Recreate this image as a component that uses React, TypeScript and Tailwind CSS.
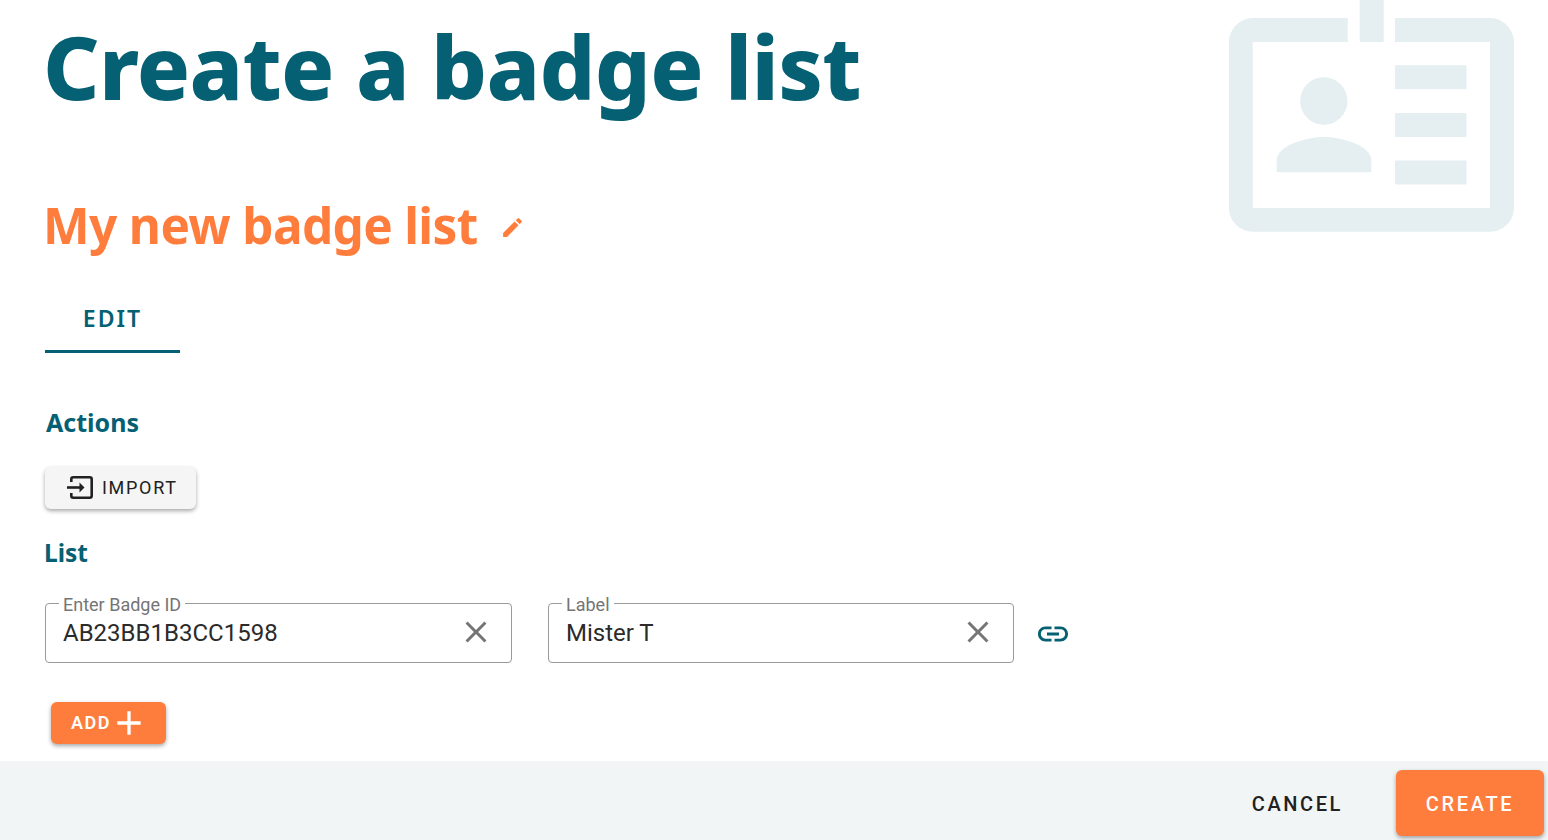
const heading = "font-['Noto_Sans',sans-serif]";

function BadgeArt() {
  return (
    <svg
      className="absolute left-[1210px] top-0"
      width="338"
      height="250"
      viewBox="0 0 338 250"
      fill="#e5eef1"
    >
      <path
        fillRule="evenodd"
        d="M43 18H137.7V42H42.7V208H280V42H185V18H280C293 18 304 29 304 42V208C304 221 293 231.7 280 231.7H43C30 231.7 19 221 19 208V42C19 29 30 18 43 18Z"
      />
      <rect x="149.7" y="0" width="24" height="42" rx="1" />
      <rect x="185" y="65.3" width="71.5" height="24" rx="1" />
      <rect x="185" y="113" width="71.5" height="24" rx="1" />
      <rect x="185" y="160.5" width="71.5" height="24" rx="1" />
      <circle cx="113.8" cy="101" r="23.7" />
      <path d="M66.7 172.3V160.5C66.7 144.5 98.5 137 114 137S161.3 144.5 161.3 160.5V172.3Z" />
    </svg>
  );
}

function ImportIcon() {
  return (
    <svg width="30" height="30" viewBox="0 0 30 30" fill="none" stroke="#212121" strokeWidth="2.6">
      <path d="M6.3 9V6.3a2 2 0 0 1 2-2h16.4a2 2 0 0 1 2 2v16.4a2 2 0 0 1-2 2H8.3a2 2 0 0 1-2-2V20" />
      <path d="M2 14.5h16" />
      <path d="M14.5 9.5l5 5-5 5z" fill="#212121" stroke="none" />
    </svg>
  );
}

function MaterialIcon({ d, className }: { d: string; className: string }) {
  return (
    <svg className={className} viewBox="0 0 24 24" fill="currentColor">
      <path d={d} />
    </svg>
  );
}

const closePath = "M19 6.41 17.59 5 12 10.59 6.41 5 5 6.41 10.59 12 5 17.59 6.41 19 12 13.41 17.59 19 19 17.59 13.41 12z";
const editPath = "M3 17.25V21h3.75L17.81 9.94l-3.75-3.75L3 17.25zM20.71 7.04a.996.996 0 0 0 0-1.41l-2.34-2.34a.996.996 0 0 0-1.41 0l-1.83 1.83 3.75 3.75 1.83-1.83z";
const linkPath = "M3.9 12c0-1.71 1.39-3.1 3.1-3.1h4V7H7c-2.76 0-5 2.24-5 5s2.24 5 5 5h4v-1.9H7c-1.71 0-3.1-1.39-3.1-3.1zM8 13h8v-2H8v2zm9-6h-4v1.9h4c1.71 0 3.1 1.39 3.1 3.1s-1.39 3.1-3.1 3.1h-4V17h4c2.76 0 5-2.24 5-5s-2.24-5-5-5z";
const addPath = "M19 13h-6v6h-2v-6H5v-2h6V5h2v6h6v2z";

function Field({ label, value, className }: { label: string; value: string; className: string }) {
  return (
    <div className={`relative h-[60px] rounded border border-[#9a9a9a] pl-[17px] pr-[17px] flex items-center justify-between ${className}`}>
      <span className="absolute left-[13px] -top-[8px] bg-white px-[4px] text-[18px] leading-[18px] text-[#757575]">
        {label}
      </span>
      <span className="text-[24px] leading-[28px] text-[#2b2b2b]">{value}</span>
      <MaterialIcon d={closePath} className="w-[36px] h-[36px] mt-[-2px] text-[#757575]" />
    </div>
  );
}

export default function App() {
  return (
    <div className="relative h-[840px] w-[1548px] overflow-hidden bg-white flex flex-col font-['Roboto',sans-serif]">
      <BadgeArt />

      <main className="flex-1 pl-[45px]">
        <h1 className={`${heading} pt-[11px] ml-[-2px] text-[88px] leading-[110px] font-extrabold tracking-[-0.7px] text-[#046072]`}>
          Create a badge list
        </h1>

        <div className="mt-[74px] ml-[-2px] flex items-center">
          <h2 className={`${heading} text-[49.5px] leading-[60px] font-bold tracking-[-0.65px] text-[#ff7d3c]`}>
            My new badge list
          </h2>
          <MaterialIcon d={editPath} className="ml-[22px] mt-[4px] w-[25px] h-[25px] text-[#ff7d3c]" />
        </div>

        <div className="mt-[36px] w-[135px] h-[62px] pb-[5px] border-b-[3px] border-[#046072] flex items-center justify-center">
          <span className={`${heading} text-[23px] leading-[28px] tracking-[2px] font-semibold text-[#046072]`}>EDIT</span>
        </div>

        <h3 className={`${heading} mt-[53px] ml-[1px] text-[25px] leading-[32px] font-bold text-[#046072]`}>Actions</h3>

        <button className="mt-[29px] w-[151px] h-[42px] pl-[20px] rounded-md bg-[#f5f5f5] shadow-[0_2px_4px_rgba(0,0,0,0.35)] flex items-center gap-[7px] text-[18px] tracking-[1.7px] text-[#212121]">
          <ImportIcon />
          <span className="mt-[-2px]">IMPORT</span>
        </button>

        <h3 className={`${heading} mt-[28px] ml-[-1px] text-[24.5px] leading-[32px] font-bold text-[#046072]`}>List</h3>

        <div className="mt-[34px] flex items-center">
          <Field label="Enter Badge ID" value="AB23BB1B3CC1598" className="w-[467px]" />
          <Field label="Label" value="Mister T" className="w-[466px] ml-[36px]" />
          <MaterialIcon d={linkPath} className="ml-[20.5px] mt-[2px] w-[36px] h-[36px] text-[#046072]" />
        </div>

        <button className="mt-[39px] ml-[6px] w-[115px] h-[42px] pl-[20px] rounded-md bg-[#ff7d3c] shadow-[0_2px_4px_rgba(0,0,0,0.35)] flex items-center text-[18px] font-semibold tracking-[1.5px] text-white">
          <span className="mt-[-2px]">ADD</span>
          <MaterialIcon d={addPath} className="w-[40px] h-[40px] ml-[-2px]" />
        </button>
      </main>

      <footer className="h-[79px] bg-[#f2f5f6] flex items-center justify-end pr-[4px]">
        <span className="mr-[53px] mt-[7px] text-[20px] font-medium tracking-[2.6px] text-[#212121]">CANCEL</span>
        <button className="w-[148px] h-[66px] mt-[5px] pt-[2px] rounded-md bg-[#ff7d3c] shadow-[0_2px_4px_rgba(0,0,0,0.35)] text-[20px] font-medium tracking-[2.7px] text-white">
          CREATE
        </button>
      </footer>
    </div>
  );
}
